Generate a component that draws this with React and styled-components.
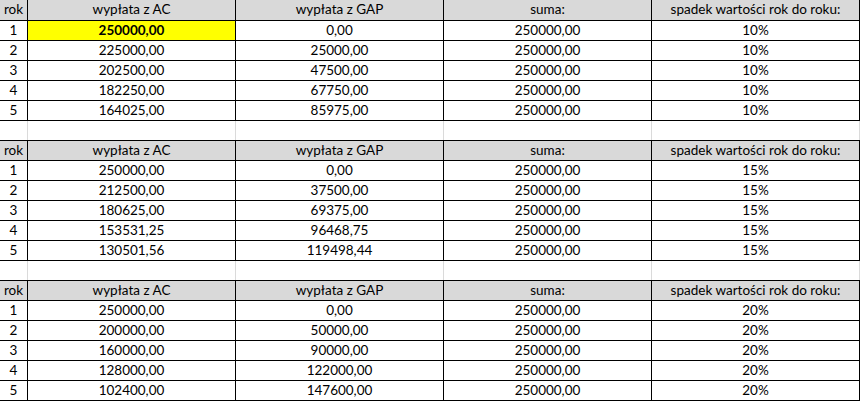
import React from "react";
import styled, { createGlobalStyle } from "styled-components";

const GlobalStyle = createGlobalStyle`
  html, body {
    margin: 0;
    padding: 0;
    background: #ffffff;
  }
  body {
    font-family: Lato, "Liberation Sans", sans-serif;
    color: #000;
  }
`;

const Sheet = styled.div`
  display: flex;
  flex-direction: column;
  width: 860px;
`;

const Table = styled.div`
  display: flex;
  flex-direction: column;
  border-top: ${({ $first }) => ($first ? "none" : "1px solid #000")};
`;

const Row = styled.div`
  display: grid;
  grid-template-columns: 28px repeat(4, 208px);
  height: ${({ $tall }) => ($tall ? "21px" : "20px")};
  background: ${({ $header }) => ($header ? "#d9d9d9" : "#fff")};
`;

const Cell = styled.div`
  box-sizing: border-box;
  border-right: 1px solid #000;
  border-bottom: 1px solid #000;
  font-size: 13.5px;
  line-height: 19px;
  text-align: center;
  white-space: nowrap;
  overflow: hidden;
  font-weight: ${({ $bold }) => ($bold ? 700 : 400)};
  background: ${({ $highlight }) => ($highlight ? "#ffff00" : "transparent")};
`;

const GapRow = styled.div`
  display: grid;
  grid-template-columns: 28px repeat(4, 208px);
  height: 19px;
`;

const GapCell = styled.div`
  box-sizing: border-box;
  border-right: 1px solid #dadada;
`;

const tables = [
  {
    rate: "10%",
    ac: ["250000,00", "225000,00", "202500,00", "182250,00", "164025,00"],
    gap: ["0,00", "25000,00", "47500,00", "67750,00", "85975,00"],
  },
  {
    rate: "15%",
    ac: ["250000,00", "212500,00", "180625,00", "153531,25", "130501,56"],
    gap: ["0,00", "37500,00", "69375,00", "96468,75", "119498,44"],
  },
  {
    rate: "20%",
    ac: ["250000,00", "200000,00", "160000,00", "128000,00", "102400,00"],
    gap: ["0,00", "50000,00", "90000,00", "122000,00", "147600,00"],
  },
];

const headers = ["rok", "wypłata z AC", "wypłata z GAP", "suma:", "spadek wartości rok do roku:"];

function Gap() {
  return (
    <GapRow>
      {headers.map((h) => (
        <GapCell key={h} />
      ))}
    </GapRow>
  );
}

export default function App() {
  return (
    <>
      <GlobalStyle />
      <Sheet>
        {tables.map((t, ti) => (
          <React.Fragment key={t.rate}>
            {ti > 0 && <Gap />}
            <Table $first={ti === 0}>
              <Row $header $tall={ti === 0}>
                {headers.map((h) => (
                  <Cell key={h}>{h}</Cell>
                ))}
              </Row>
              {t.ac.map((ac, i) => {
                const mark = ti === 0 && i === 0;
                return (
                  <Row key={i}>
                    <Cell>{i + 1}</Cell>
                    <Cell $highlight={mark} $bold={mark}>
                      {ac}
                    </Cell>
                    <Cell>{t.gap[i]}</Cell>
                    <Cell>250000,00</Cell>
                    <Cell>{t.rate}</Cell>
                  </Row>
                );
              })}
            </Table>
          </React.Fragment>
        ))}
      </Sheet>
    </>
  );
}
